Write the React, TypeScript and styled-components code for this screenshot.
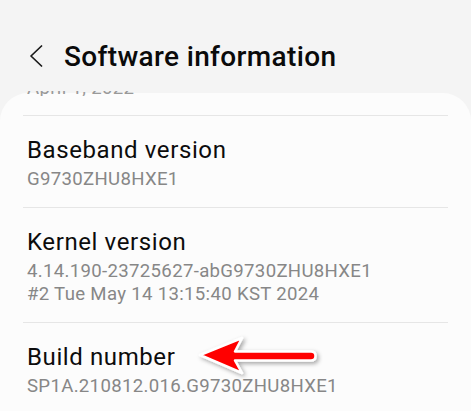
import React from "react";
import styled, { createGlobalStyle } from "styled-components";

const Global = createGlobalStyle`
  html, body { margin: 0; padding: 0; background: #f4f4f4; }
  body { font-family: Roboto, "Noto Sans", sans-serif; overflow: hidden; }
  * { box-sizing: border-box; }
`;

const Page = styled.div`
  width: 471px;
  height: 411px;
  overflow: hidden;
  background: #f4f4f4;
  display: flex;
  flex-direction: column;
`;

const Header = styled.header`
  flex: none;
  display: flex;
  align-items: center;
  padding: 40px 0 0 29px;
  height: 74px;
`;

const BackIcon = styled.svg`
  width: 14px;
  height: 22px;
  margin-top: -2px;
  flex: none;
`;

const Title = styled.h1`
  margin: 0 0 0 21px;
  font-size: 28px;
  line-height: 34px;
  font-weight: 500;
  color: #0a0a0a;
  letter-spacing: 0.35px;
`;

const PeekClip = styled.div`
  flex: none;
  position: relative;
  z-index: 1;
  height: 5px;
  margin: 17px 0 -3px 0;
  padding-left: 27px;
  overflow: hidden;
`;

const PeekText = styled.div`
  margin-top: -13.85px;
  font-size: 18.6px;
  line-height: 23px;
  letter-spacing: 0.32px;
  color: #9a9a9a;
`;

const Card = styled.section`
  flex: none;
  min-height: 330px;
  background: #fcfcfc;
  border-radius: 28px 28px 0 0;
  padding: 22px 23px 0;
`;

const Divider = styled.hr`
  margin: 0;
  border: 0;
  height: 1px;
  background: #e6e6e6;
`;

const Row = styled.div`
  position: relative;
  padding: 19.3px 0 16.35px 4px;
`;

const RowTitle = styled.div`
  font-size: 24px;
  line-height: 30px;
  letter-spacing: 0.6px;
  color: #0c0c0c;
`;

const RowValue = styled.div`
  margin-top: 2.35px;
  font-size: 18.6px;
  line-height: 23px;
  letter-spacing: 0.32px;
  color: #878787;

  & + & {
    margin-top: 0;
  }
`;

const Arrow = styled.svg`
  position: absolute;
  left: 174px;
  top: 10px;
  width: 130px;
  height: 42px;
  overflow: visible;
`;

type Item = { title: string; values: string[]; arrow?: boolean };

const items: Item[] = [
  { title: "Baseband version", values: ["G9730ZHU8HXE1"] },
  {
    title: "Kernel version",
    values: ["4.14.190-23725627-abG9730ZHU8HXE1", "#2 Tue May 14 13:15:40 KST 2024"],
  },
  { title: "Build number", values: ["SP1A.210812.016.G9730ZHU8HXE1"], arrow: true },
];

function RedArrow() {
  return (
    <Arrow viewBox="0 0 130 42">
      <defs>
        <filter id="sh" x="-20%" y="-40%" width="140%" height="180%">
          <feDropShadow dx="2" dy="2" stdDeviation="2" floodColor="#000" floodOpacity="0.35" />
        </filter>
      </defs>
      <path
        d="M3 22 L45 5 L38 18.5 L114 18.5 Q118.5 18.5 118.5 23 Q118.5 27.5 114 27.5 L38 27.5 L45 40 Z"
        fill="#ff0000"
        stroke="#ffffff"
        strokeWidth="2.5"
        strokeLinejoin="round"
        filter="url(#sh)"
      />
    </Arrow>
  );
}

export default function App() {
  return (
    <Page>
      <Global />
      <Header>
        <BackIcon viewBox="0 0 14 22">
          <polyline points="12.5,1 2,11 12.5,21" fill="none" stroke="#1a1a1a" strokeWidth="1.7" strokeLinecap="round" strokeLinejoin="round" />
        </BackIcon>
        <Title>Software information</Title>
      </Header>
      <PeekClip>
        <PeekText>April 1, 2022</PeekText>
      </PeekClip>
      <Card>
        {items.map((it) => (
          <React.Fragment key={it.title}>
            <Divider />
            <Row>
              <RowTitle>{it.title}</RowTitle>
              {it.values.map((v) => (
                <RowValue key={v}>{v}</RowValue>
              ))}
              {it.arrow && <RedArrow />}
            </Row>
          </React.Fragment>
        ))}
      </Card>
    </Page>
  );
}
